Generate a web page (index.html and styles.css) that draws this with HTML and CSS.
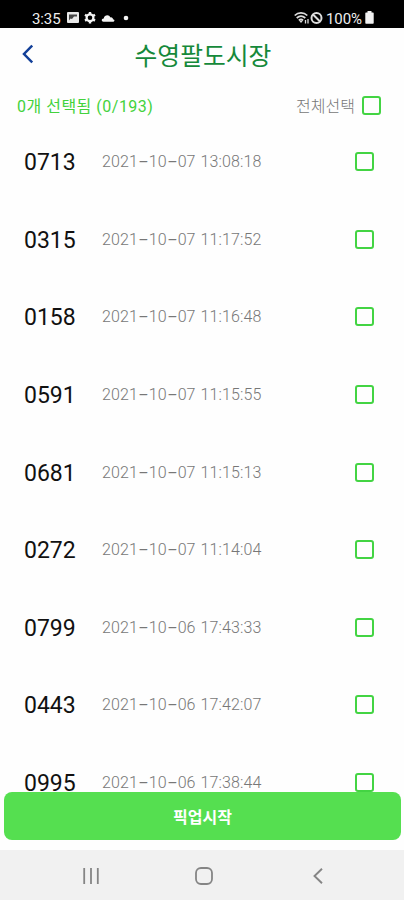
FILE: index.html
```
<!DOCTYPE html>
<html lang="ko">
<head>
<meta charset="utf-8">
<title>수영팔도시장</title>
<link rel="stylesheet" href="styles.css">
</head>
<body>
<div class="status">
  <span class="clock">3:35</span>
  <svg class="status-left" width="66" height="14" viewBox="0 0 66 14">
    <rect x="0" y="1" width="12" height="11" rx="1" fill="#e8e8e8"/>
    <path d="M2 9.500V3.500h8v2L7 5.500 5 8 3.500 7.500z" fill="#444"/>
    <circle cx="23" cy="6.700" r="3.400" fill="none" stroke="#f4f4f4" stroke-width="2.200"/>
    <path d="M23 1v2M23 10.400v2M18 3.800l1.700 1M26.300 8.600l1.700 1M28 3.800l-1.700 1M19.700 8.600l-1.700 1" stroke="#f4f4f4" stroke-width="2.400"/>
    <path d="M36.500 10.800c-2.200 0-2.400-3 .2-3.200.6-4 5.600-4.400 6.600-1.200 2-.3 2.600 1 2.700 1.900 2 .1 1.800 2.500 0 2.500z" fill="#f4f4f4"/>
    <circle cx="59" cy="7" r="2.300" fill="#f4f4f4"/>
  </svg>
  <svg class="status-net" width="30" height="14" viewBox="0 0 30 14">
    <g fill="none" stroke="#ddd" stroke-width="1.700">
      <path d="M.7 4.500c3.600-3.400 9-3.400 12.600 0M2.700 7c2.600-2.300 6-2.300 8.600 0M4.800 9.300c1.500-1.200 3-1.200 4.300 0"/>
      <path d="M11.500 9v3.500M14 8v4.500" stroke-width="1.300"/>
      <circle cx="22.500" cy="7" r="5" stroke-width="2"/>
      <path d="M19 3.500l7 7" stroke-width="2"/>
    </g>
    <path d="M5 9.500h4l-2 2.500z" fill="#ddd"/>
  </svg>
  <span class="percent">100%</span>
  <svg class="battery" width="9" height="13" viewBox="0 0 9 13"><path d="M2.500 0h4v1.500H8q.7 0 .7.700V12q0 .7-.7.700H1q-.7 0-.7-.7V2.200q0-.7.7-.7h1.500z" fill="#f2f2f2"/></svg>
</div>
<header class="header">
  <svg class="back" width="12" height="20" viewBox="0 0 12 20"><path d="M11.200 1.500L3 10l8.200 8.500" fill="none" stroke="#123f98" stroke-width="2.500"/></svg>
  <h1 class="title">수영팔도시장</h1>
</header>
<div class="summary">
  <span class="count">0개 선택됨 (0/193)</span>
  <label class="all"><span class="all-text">전체선택</span><i class="box"></i></label>
</div>
<main class="list">
  <div class="row"><b class="num">0713</b><span class="date">2021<i class="dash">-</i>10<i class="dash">-</i>07 13:08:18</span><i class="box"></i></div>
  <div class="row"><b class="num">0315</b><span class="date">2021<i class="dash">-</i>10<i class="dash">-</i>07 11:17:52</span><i class="box"></i></div>
  <div class="row"><b class="num">0158</b><span class="date">2021<i class="dash">-</i>10<i class="dash">-</i>07 11:16:48</span><i class="box"></i></div>
  <div class="row"><b class="num">0591</b><span class="date">2021<i class="dash">-</i>10<i class="dash">-</i>07 11:15:55</span><i class="box"></i></div>
  <div class="row"><b class="num">0681</b><span class="date">2021<i class="dash">-</i>10<i class="dash">-</i>07 11:15:13</span><i class="box"></i></div>
  <div class="row"><b class="num">0272</b><span class="date">2021<i class="dash">-</i>10<i class="dash">-</i>07 11:14:04</span><i class="box"></i></div>
  <div class="row"><b class="num">0799</b><span class="date">2021<i class="dash">-</i>10<i class="dash">-</i>06 17:43:33</span><i class="box"></i></div>
  <div class="row"><b class="num">0443</b><span class="date">2021<i class="dash">-</i>10<i class="dash">-</i>06 17:42:07</span><i class="box"></i></div>
  <div class="row"><b class="num">0995</b><span class="date">2021<i class="dash">-</i>10<i class="dash">-</i>06 17:38:44</span><i class="box"></i></div>
</main>
<button class="start">픽업시작</button>
<nav class="nav">
  <svg width="16" height="16" viewBox="0 0 16 16"><path d="M1.200 0v16M8 0v16M14.800 0v16" stroke="#858585" stroke-width="1.800"/></svg>
  <svg class="home" width="18" height="18" viewBox="0 0 18 18"><rect x="1" y="1" width="16" height="16" rx="5" fill="none" stroke="#858585" stroke-width="1.800"/></svg>
  <svg width="10" height="16" viewBox="0 0 10 16"><path d="M9 .8L1.500 8 9 15.200" fill="none" stroke="#858585" stroke-width="1.900"/></svg>
</nav>
</body>
</html>
```
FILE: styles.css
```
* { box-sizing: border-box; }
body {
  margin: 0;
  width: 404px;
  height: 900px;
  overflow: hidden;
  display: flex;
  flex-direction: column;
  background: #fefefe;
  font-family: Roboto, "Noto Sans CJK KR", sans-serif;
}
i, b { font-style: normal; font-weight: 400; }
svg { display: block; flex: none; }
.status {
  flex: none;
  height: 28px;
  padding: 8px 30px 0 32px;
  display: flex;
  align-items: center;
  background: #000;
  color: #eee;
  font-size: 15px;
  line-height: 20px;
}
.clock { width: 35px; padding-top: 1px; letter-spacing: -0.1px; }
.status-net { margin-left: auto; margin-right: 2px; }
.percent { width: 39px; padding-top: 1px; letter-spacing: -0.1px; white-space: nowrap; }
.battery { margin-top: -1px; }
.header {
  flex: none;
  height: 52px;
  padding: 0 21px;
  display: grid;
  grid-template-columns: 12px 1fr 12px;
  align-items: center;
}
.title {
  margin: 5px 0 0;
  padding-left: 2px;
  text-align: center;
  font-size: 24.8px;
  line-height: 36px;
  font-weight: 400;
  color: #15893a;
}
.summary {
  flex: none;
  height: 43px;
  padding: 0 23px 0 17px;
  display: flex;
  align-items: center;
  justify-content: space-between;
  margin-top: 4px;
  margin-bottom: -4px;
}
.count { margin-top: -2px; font-size: 16px; letter-spacing: 0.5px; color: #43d23c; }
.all { display: flex; align-items: center; gap: 7px; }
.all-text { margin-top: -2px; font-size: 16px; font-weight: 300; color: #777; }
.box {
  width: 19px;
  height: 19px;
  border: 2px solid #43d443;
  border-radius: 3px;
}
.list { flex: none; height: 669px; overflow: hidden; }
.row {
  height: 77.6px;
  padding: 0 30px 0 24px;
  display: grid;
  grid-template-columns: 78px 1fr 19px;
  align-items: center;
}
.num { padding-top: 2px; font-size: 23px; color: #111; }
.date { font-size: 16px; font-weight: 300; letter-spacing: 0.1px; word-spacing: 1px; color: #777; white-space: nowrap; }
.dash { display: inline-block; width: 10.9px; text-align: center; transform: scaleX(2); }
.start {
  flex: none;
  height: 48px;
  margin: 0 3px 0 4px;
  border: 0;
  border-radius: 8px;
  background: #55df50;
  color: #fff;
  font: 700 16px Roboto, "Noto Sans CJK KR", sans-serif;
}
.nav {
  flex: none;
  height: 50px;
  margin-top: 10px;
  padding: 2px 81px 0 83px;
  display: flex;
  justify-content: space-between;
  align-items: center;
  background: #f1f1f1;
}
.home { margin-right: 4px; }
```
